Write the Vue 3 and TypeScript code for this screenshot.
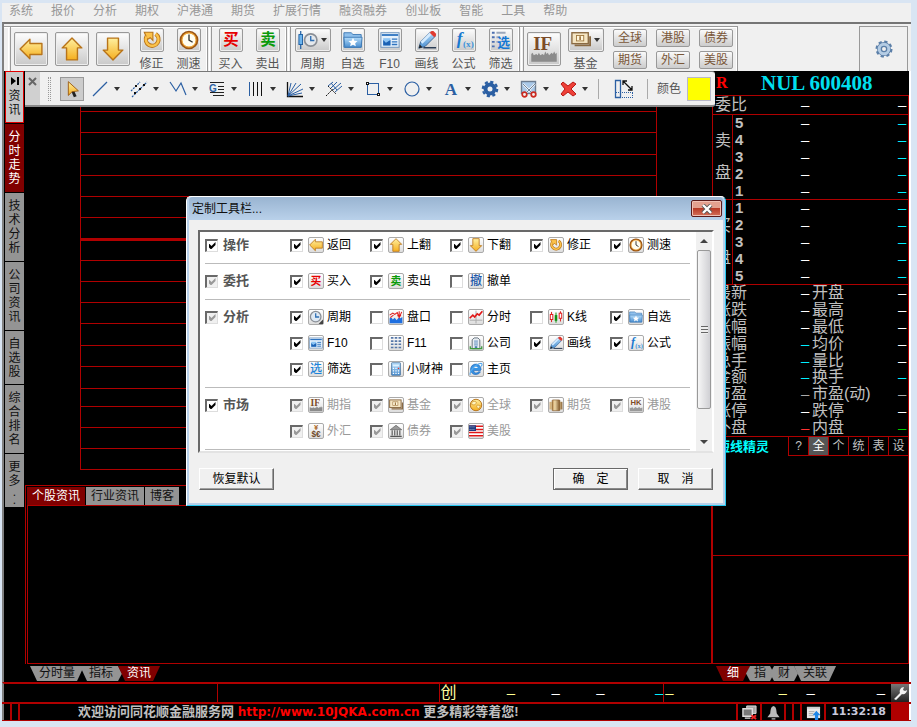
<script setup lang="ts">
import { h, ref } from 'vue'

interface Tool { icon: string; label: string; wide?: boolean }
interface Option { icon: string; label: string; on: boolean }
interface Section { name: string; on: boolean; lockedHead?: boolean; locked?: boolean; items: Option[] }
interface Quote { left: string; lt: string; right: string; rt: string }
interface Glyph { s: string; x: number; y: number; size: number; fill: string; face: string; weight?: number; slant?: string; start?: boolean }

const CJK = 'Noto Sans CJK SC, sans-serif'
const SERIF = 'Liberation Serif, serif'
const SANS = 'Liberation Sans, sans-serif'

// Lettering that belongs to an icon, in the icon's own coordinates
const glyphs: Record<string, Glyph[]> = {
  buy: [{ s: '买', x: 11, y: 17, size: 17, fill: '#e60000', face: CJK }],
  sell: [{ s: '卖', x: 11, y: 17, size: 17, fill: '#0a9a0a', face: CJK }],
  cancel: [{ s: '撤', x: 11, y: 18, size: 19, fill: '#1c57a8', face: CJK, weight: 500 }],
  pick: [{ s: '选', x: 11, y: 18, size: 19, fill: '#1d84d8', face: CJK, weight: 500 }],
  fx: [
    { s: 'f', x: 3, y: 15, size: 19, fill: '#1879d0', face: SERIF, slant: 'italic', start: true },
    { s: '(x)', x: 10, y: 19, size: 10, fill: '#3a93dc', face: SERIF, start: true },
  ],
  filter: [{ s: '选', x: 14, y: 19, size: 14, fill: '#1477d4', face: CJK }],
  if: [{ s: 'IF', x: 10, y: 12, size: 15, fill: '#7c4c28', face: SERIF }],
  hk: [{ s: 'HK', x: 11, y: 11, size: 12, fill: '#7c4c28', face: SANS }],
  fxrate: [
    { s: '¥', x: 11, y: 10, size: 12, fill: '#a8641e', face: SANS },
    { s: '$€', x: 11, y: 20, size: 13, fill: '#6d4828', face: SANS },
  ],
  gann: [{ s: 'G', x: 5, y: 12, size: 10, fill: '#2b5fa3', face: SANS }],
  text: [{ s: 'A', x: 9, y: 15, size: 17, fill: '#2b5fa3', face: SERIF }],
}
const lettersOnly = ['buy', 'sell', 'cancel', 'pick', 'fx', 'fxrate', 'text']

const Icon = (props: { name: string; box?: number }) => {
  const box = props.box ?? 22
  const art = lettersOnly.includes(props.name) ? [] : [h('use', { href: '#i-' + props.name, width: box, height: box })]
  const letters = (glyphs[props.name] ?? []).map(g => h('text', {
    x: g.x,
    y: g.y,
    fill: g.fill,
    'font-size': g.size,
    'font-family': g.face,
    'font-weight': g.weight ?? 700,
    'font-style': g.slant ?? 'normal',
    'text-anchor': g.start ? 'start' : 'middle',
  }, g.s))
  return h('svg', { viewBox: `0 0 ${box} ${box}`, 'aria-hidden': 'true' }, [...art, ...letters])
}
Icon.props = ['name', 'box']

const menus = ['系统', '报价', '分析', '期权', '沪港通', '期货', '扩展行情', '融资融券', '创业板', '智能', '工具', '帮助']

const navTools: Tool[] = [
  { icon: 'left', label: '返回' },
  { icon: 'up', label: '上翻' },
  { icon: 'down', label: '下翻' },
]
const baseTools: Tool[] = [
  { icon: 'redo', label: '修正' },
  { icon: 'clock', label: '测速' },
]
const tradeTools: Tool[] = [
  { icon: 'buy', label: '买入' },
  { icon: 'sell', label: '卖出' },
]
const viewTools: Tool[] = [
  { icon: 'period', label: '周期', wide: true },
  { icon: 'folder', label: '自选' },
  { icon: 'f10', label: 'F10' },
  { icon: 'pencil', label: '画线' },
  { icon: 'fx', label: '公式' },
  { icon: 'filter', label: '筛选' },
]
const markets = ['全球', '港股', '债券', '期货', '外汇', '美股']

const drawTools = ['line', 'parallel', 'zigzag', 'gann', 'bars', 'fan', 'fork', 'rect', 'circle', 'text', 'gear', 'cut', 'cross']

const sideTabs = ['分时走势', '技术分析', '公司资讯', '自选股', '综合排名', '更多..']
const newsTabs = ['个股资讯', '行业资讯', '博客']

const gridLines = [4, 25, 47, 68, 89, 110, 153, 174, 195, 216, 238, 259, 281, 299, 320, 341, 362]

const quotes: Quote[] = [
  { left: '最新', lt: 'white', right: '开盘', rt: 'white' },
  { left: '涨跌', lt: 'white', right: '最高', rt: 'white' },
  { left: '涨幅', lt: 'white', right: '最低', rt: 'white' },
  { left: '振幅', lt: 'cyan', right: '均价', rt: 'white' },
  { left: '总手', lt: 'cyan', right: '量比', rt: 'white' },
  { left: '金额', lt: 'cyan', right: '换手', rt: 'cyan' },
  { left: '市盈', lt: 'dim', right: '市盈(动)', rt: 'dim' },
  { left: '涨停', lt: 'white', right: '跌停', rt: 'white' },
  { left: '外盘', lt: 'red', right: '内盘', rt: 'green' },
]
const books = [
  { name: '卖盘', levels: [5, 4, 3, 2, 1] },
  { name: '买盘', levels: [1, 2, 3, 4, 5] },
]
const spiritTabs = ['?', '全', '个', '统', '表', '设']

const sections = ref<Section[]>([
  {
    name: '操作', on: true, items: [
      { icon: 'left', label: '返回', on: true },
      { icon: 'up', label: '上翻', on: true },
      { icon: 'down', label: '下翻', on: true },
      { icon: 'redo', label: '修正', on: true },
      { icon: 'clock', label: '测速', on: true },
    ],
  },
  {
    name: '委托', on: true, lockedHead: true, items: [
      { icon: 'buy', label: '买入', on: true },
      { icon: 'sell', label: '卖出', on: true },
      { icon: 'cancel', label: '撤单', on: false },
    ],
  },
  {
    name: '分析', on: true, lockedHead: true, items: [
      { icon: 'watch', label: '周期', on: true },
      { icon: 'depth', label: '盘口', on: false },
      { icon: 'trend', label: '分时', on: false },
      { icon: 'candles', label: 'K线', on: false },
      { icon: 'folder', label: '自选', on: true },
      { icon: 'f10', label: 'F10', on: true },
      { icon: 'f11', label: 'F11', on: false },
      { icon: 'company', label: '公司', on: false },
      { icon: 'pencil', label: '画线', on: true },
      { icon: 'fx', label: '公式', on: true },
      { icon: 'pick', label: '筛选', on: true },
      { icon: 'calc', label: '小财神', on: false },
      { icon: 'ie', label: '主页', on: false },
    ],
  },
  {
    name: '市场', on: true, locked: true, items: [
      { icon: 'if', label: '期指', on: true },
      { icon: 'money', label: '基金', on: true },
      { icon: 'globe', label: '全球', on: true },
      { icon: 'barrel', label: '期货', on: true },
      { icon: 'hk', label: '港股', on: true },
      { icon: 'fxrate', label: '外汇', on: true },
      { icon: 'bank', label: '债券', on: true },
      { icon: 'flag', label: '美股', on: true },
    ],
  },
])
</script>

<template>
  <svg class="defs" width="0" height="0" aria-hidden="true">
    <defs>
      <linearGradient id="gold" x1="0" y1="0" x2="0" y2="1">
        <stop offset="0" stop-color="#fff0a0" /><stop offset="1" stop-color="#f5ae1e" />
      </linearGradient>
      <linearGradient id="blue" x1="0" y1="0" x2="0" y2="1">
        <stop offset="0" stop-color="#b4dcfa" /><stop offset="1" stop-color="#4a8ed0" />
      </linearGradient>
      <linearGradient id="brown" x1="0" y1="0" x2="1" y2="0">
        <stop offset="0" stop-color="#b98a4c" /><stop offset=".35" stop-color="#efd9a8" /><stop offset="1" stop-color="#7c5426" />
      </linearGradient>
    </defs>
    <symbol id="i-left" viewBox="0 0 22 22"><path d="M1 11 10 2v4h11v10H10v4z" fill="url(#gold)" stroke="#b8741a" stroke-width="1.3" stroke-linejoin="round" /></symbol>
    <symbol id="i-up" viewBox="0 0 22 22"><path d="M11 1 20 10h-4v11H6V10H2z" fill="url(#gold)" stroke="#b8741a" stroke-width="1.3" stroke-linejoin="round" /></symbol>
    <symbol id="i-down" viewBox="0 0 22 22"><path d="M11 21 20 12h-4V1H6v11H2z" fill="url(#gold)" stroke="#b8741a" stroke-width="1.3" stroke-linejoin="round" /></symbol>
    <symbol id="i-redo" viewBox="0 0 22 22">
      <path d="M15 4.500A7 7 0 1 1 5 7" fill="none" stroke="#b8741a" stroke-width="4.600" />
      <path d="M2.500 2.500h9.500v9l-3-3-3 2z" fill="#fbc24a" stroke="#b8741a" stroke-width="1.200" />
      <path d="M15 4.500A7 7 0 1 1 5 7" fill="none" stroke="#fbc24a" stroke-width="2.600" />
    </symbol>
    <symbol id="i-clock" viewBox="0 0 22 22">
      <circle cx="11" cy="11" r="9" fill="#fffdf0" stroke="#9a5312" stroke-width="2.600" />
      <circle cx="11" cy="11" r="7.800" fill="none" stroke="#efa534" stroke-width="1.200" />
      <path d="M11 5v6l4 2.500" fill="none" stroke="#333" stroke-width="1.500" />
    </symbol>
    <symbol id="i-period" viewBox="0 0 22 22">
      <path d="M3 1v20" stroke="#1b5ca0" stroke-width="1.300" /><rect x="1" y="5" width="4" height="11" fill="#6db5ee" stroke="#1b5ca0" />
      <circle cx="14" cy="11" r="6.800" fill="#e4e8ec" stroke="#8a8f96" stroke-width="1.800" /><path d="M14 6.500v5h4" fill="none" stroke="#2e6fb4" stroke-width="1.500" />
    </symbol>
    <symbol id="i-watch" viewBox="0 0 22 22">
      <circle cx="10.500" cy="10.500" r="8.300" fill="#dfe9f3" stroke="#8a8f96" stroke-width="2" /><path d="M10.500 5v6h5.500" fill="none" stroke="#2e6fb4" stroke-width="2" /><path d="M22 15v7h-7z" fill="#444" />
    </symbol>
    <symbol id="i-folder" viewBox="0 0 22 22">
      <path d="M1 3h8l2 2h9v14H1z" fill="#8fc0ec" stroke="#3c78b4" /><path d="M1 8h20l-1 11H2z" fill="url(#blue)" stroke="#3c78b4" />
      <path d="m11 8.500 1.500 3.200 3.500.4-2.600 2.400.7 3.500-3.100-1.700-3.100 1.700.7-3.500L6 12.100l3.500-.4z" fill="#fff" />
    </symbol>
    <symbol id="i-f10" viewBox="0 0 22 22">
      <rect x="1" y="3" width="20" height="16" fill="#e6f1fb" stroke="#6a8fb8" /><path d="M2 5.500h18" stroke="#2f74c0" stroke-width="2" />
      <path d="M3.500 9h8v8h-8z" fill="#8cc4f4" /><path d="m3.500 11 3 3 5-3v6h-8z" fill="#1c62b4" /><path d="M13 10h6M13 13h6M13 16h6" stroke="#2f74c0" stroke-width="1.500" />
    </symbol>
    <symbol id="i-pencil" viewBox="0 0 22 22">
      <path d="M7 19.500h14" stroke="#2b3d55" stroke-width="1.600" /><path d="m2 20 2-7L15 2l5 5L9 18z" fill="url(#blue)" stroke="#35608f" /><path d="M4 13 15 2l2 2L6 15z" fill="#d4ebff" /><path d="m14 3 2-2h2l3 3v2l-2 2z" fill="#e03a30" /><path d="m2 20 1-4 3 3z" fill="#222" />
    </symbol>
    <symbol id="i-filter" viewBox="0 0 22 22">
      <path d="M1 3h3M1 8h3M1 13h3M1 18h3" stroke="#4d6fb0" stroke-width="2" /><path d="M6 3h10M6 8h4M6 13h2" stroke="#9ba7bb" stroke-width="2" />
    </symbol>
    <symbol id="i-if" viewBox="0 0 22 22">
      <path d="M1 21v-6l1-1 1 2 2-1 1 1 1-2 1 2 2-1 1 1 1-3 1 2 1-1 1 2 2-2 1 1 1-2 1 2 1-1v7z" fill="#8b8b8b" />
    </symbol>
    <symbol id="i-money" viewBox="0 0 22 22">
      <path d="M4 17h17V7" fill="none" stroke="#8a6a42" stroke-width="2" /><rect x="1" y="3" width="18" height="12" fill="#f5e6c4" stroke="#8a6a42" stroke-width="1.500" /><rect x="6" y="6" width="8" height="6" fill="#fff6dc" stroke="#a07840" /><path d="M10 7v4" stroke="#8a5a20" stroke-width="1.500" />
    </symbol>
    <symbol id="i-depth" viewBox="0 0 22 22">
      <path d="M1 21v-8l3-1 2 3 3-3 3 4 3-4 3 1 3-2v10z" fill="#1f6fe0" /><path d="m1 8 5-3 3 2 4-3 3 8 4-9M13 9h6M16 2v10M2 12l5-4" fill="none" stroke="#e01818" stroke-width="1.600" />
    </symbol>
    <symbol id="i-trend" viewBox="0 0 22 22">
      <path d="M1 16h20M11 1v20" stroke="#aaa" stroke-width="1.500" /><path d="m1 13 5-5 3 3 4-5 3 2 5-6" fill="none" stroke="#e01818" stroke-width="2.600" />
    </symbol>
    <symbol id="i-candles" viewBox="0 0 22 22">
      <path d="M4 3v16M18 2v16" stroke="#e01818" stroke-width="1.500" /><path d="M11 4v16" stroke="#109010" stroke-width="1.500" /><rect x="2" y="7" width="4" height="8" fill="#fff" stroke="#e01818" stroke-width="1.500" /><rect x="9" y="8" width="4" height="9" fill="#109010" /><rect x="16" y="5" width="4" height="8" fill="#fff" stroke="#e01818" stroke-width="1.500" />
    </symbol>
    <symbol id="i-f11" viewBox="0 0 22 22"><path d="M3 3h16M3 8h16M3 13h16M3 18h16" stroke="#5577a8" stroke-width="2.500" stroke-dasharray="4 2" /></symbol>
    <symbol id="i-company" viewBox="0 0 22 22">
      <path d="M5 20V6l3-3h6l3 3v14z" fill="#e8edf2" stroke="#66727e" stroke-width="1.500" /><path d="M8 8h6M8 11h6M8 14h6" stroke="#5b8cc0" stroke-width="1.500" /><path d="M9 16h4v4H9z" fill="#4b7fb4" /><path d="M1 20h20M2 16v4M20 16v4" stroke="#3e9a3e" stroke-width="2" />
    </symbol>
    <symbol id="i-calc" viewBox="0 0 22 22">
      <rect x="4" y="1" width="14" height="20" rx="1" fill="url(#blue)" stroke="#35608f" /><path d="M6 4h10v3H6z" fill="#dff1ff" /><path d="M6 10h10M6 14h10M6 18h10" stroke="#fff" stroke-width="2" stroke-dasharray="2 2" /><path d="M14 9h2v2h-2z" fill="#d33" />
    </symbol>
    <symbol id="i-ie" viewBox="0 0 22 22">
      <path d="M18 13.500H7a4.500 4.500 0 0 0 8 2h3A8.300 8.300 0 1 1 19 12z" fill="#3793e4" stroke="#1c62b4" /><path d="M7.500 9.500H14a3.400 3.400 0 0 0-6.500 0z" fill="#f4f4f4" /><path d="M2 20C0 15 10 3 19 2c2 0 2 3 0 5" fill="none" stroke="#55aaf0" stroke-width="1.800" />
    </symbol>
    <symbol id="i-globe" viewBox="0 0 22 22"><circle cx="11" cy="11" r="9" fill="url(#gold)" stroke="#b8741a" stroke-width="1.500" /><path d="m5 6 5-1 2 3-4 3-4-1zM13 11l5 1-3 5-3-3z" fill="#fff5c0" stroke="#c98a20" /></symbol>
    <symbol id="i-barrel" viewBox="0 0 22 22"><rect x="1" y="6" width="7" height="12" fill="url(#brown)" /><rect x="14" y="6" width="7" height="12" fill="url(#brown)" /><rect x="5" y="3" width="12" height="17" rx="1" fill="url(#brown)" stroke="#80592c" /></symbol>
    <symbol id="i-hk" viewBox="0 0 22 22"><path d="M1 21v-6l2 1 2-2 2 3 3-3 3 2 3-2 2 2 3-1v6z" fill="#9a9a9a" /></symbol>
    <symbol id="i-bank" viewBox="0 0 22 22"><path d="M11 2 20 9H2z" fill="#999" stroke="#555" /><path d="M5 10v8M9 10v8M13 10v8M17 10v8" stroke="#666" stroke-width="2" /><path d="M2 19.500h18" stroke="#555" stroke-width="2" /></symbol>
    <symbol id="i-flag" viewBox="0 0 22 22"><path d="M0 2h22v18H0z" fill="#fff" /><path d="M0 3.500h22M0 8.500h22M0 13.500h22M0 18.500h22" stroke="#e01818" stroke-width="2.400" /><path d="M0 2h11v9H0z" fill="#1f3a80" /><path d="M1 4.500h9M1 8.500h9" stroke="#fff" stroke-dasharray="1.500 1.500" /></symbol>

    <symbol id="i-line" viewBox="0 0 18 18"><path d="M2 16 16 2" stroke="#2b5fa3" stroke-width="1.200" /></symbol>
    <symbol id="i-parallel" viewBox="0 0 18 18"><path d="M1 11 10 2M2 17 17 2" stroke="#2b5fa3" stroke-width="1.200" stroke-dasharray="2 1" /><path d="M5 5h2v2H5zM13 4h2v2h-2zM4 12h2v2H4zM9 8h2v2H9z" fill="#111" /></symbol>
    <symbol id="i-zigzag" viewBox="0 0 18 18"><path d="m1 2 6 9 5-8 5 12" fill="none" stroke="#2b5fa3" stroke-width="1.200" /></symbol>
    <symbol id="i-gann" viewBox="0 0 18 18"><path d="M2 2.500h14M10 6.500h6M10 9.500h6M2 12.500h14M5 15.500h11" stroke="#222" /></symbol>
    <symbol id="i-bars" viewBox="0 0 18 18"><path d="M2.500 2v14" stroke="#2b5fa3" /><path d="M6.500 2v14M10.500 2v14M14.500 2v14" stroke="#111" /></symbol>
    <symbol id="i-fan" viewBox="0 0 18 18"><path d="M1.500 2v14.500H17" fill="none" stroke="#111" stroke-width="1.300" /><path d="M2 16 5 3M2 16 10 3M2 16 15 4M2 16 17 9M2 16l14-3" stroke="#2b5fa3" /></symbol>
    <symbol id="i-fork" viewBox="0 0 18 18"><path d="M1 16 8 9M3 6l8 8" stroke="#111" stroke-dasharray="2 1" /><path d="M3 6 8 2M6 8l6-6M8 10l8-7M10 12l7-6M6 3l6 7" stroke="#2b5fa3" /></symbol>
    <symbol id="i-rect" viewBox="0 0 18 18"><rect x="3.500" y="3.500" width="11" height="11" fill="none" stroke="#2b5fa3" /><path d="M2 2h3v3H2zM13 13h3v3h-3z" fill="#111" /><path d="M3 3h1v1H3zM14 14h1v1h-1z" fill="#fff" /></symbol>
    <symbol id="i-circle" viewBox="0 0 18 18"><circle cx="9" cy="9" r="7" fill="none" stroke="#2b5fa3" stroke-width="1.200" /></symbol>
    <symbol id="i-gear" viewBox="0 0 18 18"><circle cx="9" cy="9" r="4.500" fill="none" stroke="currentColor" stroke-width="4" /><circle cx="9" cy="9" r="7.200" fill="none" stroke="currentColor" stroke-width="2.200" stroke-dasharray="3.200 2.455" /></symbol>
    <symbol id="i-cog" viewBox="0 0 18 18">
      <circle cx="9" cy="9" r="7.200" fill="none" stroke="#5b7fa8" stroke-width="2.600" stroke-dasharray="3.200 2.455" />
      <circle cx="9" cy="9" r="4.500" fill="none" stroke="#5b7fa8" stroke-width="5" /><circle cx="9" cy="9" r="4.800" fill="none" stroke="#b4cce4" stroke-width="3" />
    </symbol>
    <symbol id="i-cut" viewBox="0 0 18 18"><rect x="1.500" y="1.500" width="14" height="12" fill="#a9c8e8" stroke="#6c7c90" stroke-width="1.400" /><path d="m3 4 8 8M15 4l-8 8" stroke="#f2f6fa" stroke-width="2" /><path d="m3 4 8 8M15 4l-8 8" stroke="#708298" /><circle cx="4.500" cy="14.500" r="2.300" fill="#eee" stroke="#cc2a20" stroke-width="1.700" /><circle cx="13.500" cy="14.500" r="2.300" fill="#eee" stroke="#cc2a20" stroke-width="1.700" /></symbol>
    <symbol id="i-cross" viewBox="0 0 18 18"><path d="m2 4 2-2 5 4 5-4 3 2-5 5 5 5-3 2-5-4-5 4-2-2 4-5z" fill="#ee4038" stroke="#b81a16" stroke-linejoin="round" /></symbol>
  </svg>

  <div class="window">
    <nav class="menubar">
      <a v-for="m in menus" :key="m" href="#">{{ m }}</a>
    </nav>

    <header class="toolbar">
      <div class="group first">
        <i class="grip"></i>
        <div class="bigs">
          <button v-for="t in navTools" :key="t.icon" class="tile big" :aria-label="t.label"><Icon :name="t.icon" /></button>
        </div>
        <button v-for="t in baseTools" :key="t.icon" class="tool"><span class="tile"><Icon :name="t.icon" /></span>{{ t.label }}</button>
      </div>
      <div class="group">
        <i class="grip"></i>
        <button v-for="t in tradeTools" :key="t.icon" class="tool"><span class="tile"><Icon :name="t.icon" /></span>{{ t.label }}</button>
      </div>
      <div class="group">
        <i class="grip"></i>
        <button v-for="t in viewTools" :key="t.icon" class="tool" :class="{ wide: t.wide }"><span class="tile"><Icon :name="t.icon" /><i v-if="t.wide" class="caret"></i></span>{{ t.label }}</button>
      </div>
      <div class="group">
        <i class="grip"></i>
        <div class="bigs"><button class="tile big index" aria-label="期指"><Icon name="if" /></button></div>
        <button class="tool wide"><span class="tile"><Icon name="money" /><i class="caret"></i></span>基金</button>
        <div class="markets">
          <button v-for="m in markets" :key="m">{{ m }}</button>
        </div>
      </div>
      <div class="settings"><button aria-label="设置"><Icon name="cog" :box="18" /></button></div>
    </header>

    <div class="main">
      <aside class="side">
        <button class="news-toggle">
          <svg viewBox="0 0 8 8"><path d="M0 0l5 4-5 4zM6 0h2v8H6z" /></svg>
          <span>资讯</span>
        </button>
        <button v-for="(s, i) in sideTabs" :key="s" :class="{ active: i === 0, short: s.length < 4 }">
          <span v-for="(c, k) in s" :key="k">{{ c }}</span>
        </button>
      </aside>

      <section class="center">
        <div class="drawbar">
          <button class="drawclose" aria-label="关闭"><svg viewBox="0 0 9 9"><path d="m1 1 7 7M8 1 1 8" stroke="#666" stroke-width="2" /></svg></button>
          <i class="dots"></i>
          <button class="pointer" aria-label="选择"><svg viewBox="0 0 24 24"><path d="m11 14 3 7 3-1-3-7z" fill="#222" /><path d="M8 4v15l4-4 7-1z" fill="url(#gold)" stroke="#9a5a10" /></svg></button>
          <div class="drawtools">
            <button v-for="d in drawTools" :key="d" :aria-label="d" class="drawtool"><Icon :name="d" :box="18" /><i class="caret"></i></button>
          </div>
          <i class="rule"></i>
          <button class="measure" aria-label="区间统计"><svg viewBox="0 0 20 20"><path d="M1.500 13V1.500h5V13" fill="none" stroke="#2b5fa3" stroke-width="1.300" /><path d="M1.500 13v5.500h5V13" fill="none" stroke="#2b5fa3" stroke-width="1.300" /><path d="M2 13.500h17M8 18.500h11M18.500 14v5" stroke="#2b5fa3" stroke-dasharray="1 1" /><path d="m9 2 9 9M9 6V2h4M18 7v4h-4" fill="none" stroke="#111" stroke-width="1.300" /></svg></button>
          <i class="rule"></i>
          <button class="color">颜色<span class="swatch"></span></button>
        </div>

        <div class="chart">
          <svg class="plot">
            <rect v-for="y in gridLines" :key="y" x="0" :y="y" width="100%" height="1" />
            <rect x="0" y="131" width="100%" height="3" />
            <rect x="0" y="0" width="1" height="363" />
            <rect class="far" x="100%" y="0" width="1" height="363" />
          </svg>
        </div>

        <div class="news">
          <div class="newstabs">
            <button v-for="(n, i) in newsTabs" :key="n" :class="{ active: i === 0 }">{{ n }}</button>
          </div>
          <div class="newsbody"></div>
        </div>

        <div class="foot-tabs">
          <button class="ft lead">分时量</button>
          <button class="ft mid">指标</button>
          <button class="ft lead active">资讯</button>
        </div>
      </section>

      <aside class="quote">
        <h1><b>R</b><span>NUL 600408</span></h1>
        <div class="panel">
          <div class="ratio"><span>委比</span><i>–</i><i>–</i></div>
          <div v-for="b in books" :key="b.name" class="book">
            <div class="bname"><span>{{ b.name }}</span></div>
            <div class="levels">
              <div v-for="l in b.levels" :key="l" class="level"><b>{{ l }}</b><i>–</i><i class="cyan">–</i></div>
            </div>
          </div>
          <div class="stats">
            <div v-for="q in quotes" :key="q.left" class="stat">
              <span>{{ q.left }}</span><i :class="q.lt">–</i><span>{{ q.right }}</span><i :class="q.rt">–</i>
            </div>
          </div>
          <div class="spirit">
            <strong>短线精灵</strong>
            <button v-for="s in spiritTabs" :key="s" :class="{ active: s === '全' }">{{ s }}</button>
          </div>
          <div class="feed"></div>
          <div class="feed lower"></div>
        </div>
        <div class="foot-tabs right">
          <button class="ft lead active">细</button>
          <button class="ft mid">指</button>
          <button class="ft mid">财</button>
          <button class="ft lead">关联</button>
        </div>
      </aside>
    </div>

    <div class="ticker">
      <div class="cell a"></div>
      <div class="cell b"></div>
      <div class="cell c"><em>创</em><i class="d1 pale">–</i><i class="d2">–</i><i class="d2">–</i><i class="d1 cyan">–</i></div>
      <div class="cell d"><i class="pale">–</i><i class="d3 pale">–</i><i class="d4">–</i><i class="d5">–</i></div>
      <button class="wrench" aria-label="工具"><svg viewBox="0 0 18 18"><path d="M3 15 9 9c-1-3 1-6 4-6l-1 3 2 1 2-1c0 3-3 5-5 4l-6 6z" fill="#f2f2f2" /></svg></button>
    </div>

    <footer class="status">
      <i class="bar"></i><i class="bar"></i>
      <p>欢迎访问同花顺金融服务网 <a href="#">http://www.10JQKA.com.cn</a> 更多精彩等着您!</p>
      <div class="tray"><svg viewBox="0 0 16 16"><path d="M5 1h10v8H5z" fill="#aaa" stroke="#ddd" /><path d="M1 4h10v8H1z" fill="#777" stroke="#ddd" stroke-width="1.500" /><path d="M3 14h6" stroke="#ccc" stroke-width="1.500" /><path d="m10 11 5 4M15 11l-5 4" stroke="#e22" stroke-width="2" /></svg></div>
      <div class="tray"><svg viewBox="0 0 16 16"><path d="M8 1c3 1 3 4 3.500 8l3 4h-13l3-4C5 5 5 2 8 1zM6 14h4v1.500H6z" fill="#bbb" /></svg></div>
      <div class="slot"></div><div class="slot"></div>
      <div class="tray"><svg viewBox="0 0 16 16"><path d="M1 2h14v12H1z" fill="#e8e8e8" /><path d="M1 2h14v2H1z" fill="#ccc" /><path d="M3 7h6M3 9h5M3 11h5" stroke="#aaa" /><path d="m11 6 4.500 5H13v5H9.500v-5H7z" fill="#1e86e8" /></svg></div>
      <time>11:32:18</time>
      <div class="block"></div>
    </footer>

    <div class="dialog" role="dialog" aria-label="定制工具栏">
      <div class="caption">
        <span>定制工具栏...</span>
        <button aria-label="关闭"><svg viewBox="0 0 12 10"><path d="m2 1 8 8M10 1 2 9" stroke="#555" stroke-width="4" /><path d="m2 1 8 8M10 1 2 9" stroke="#fff" stroke-width="2.400" /></svg></button>
      </div>
      <div class="body">
        <div class="list">
          <div class="sections">
            <div v-for="s in sections" :key="s.name" class="section">
              <label class="head"><input v-model="s.on" type="checkbox" :disabled="s.lockedHead">{{ s.name }}</label>
              <div class="items">
                <label v-for="o in s.items" :key="o.label" class="item" :class="{ locked: s.locked }">
                  <input v-model="o.on" type="checkbox" :disabled="s.locked">
                  <span class="mini"><Icon :name="o.icon" /></span>{{ o.label }}
                </label>
              </div>
            </div>
          </div>
          <div class="scroll">
            <button class="step up" aria-label="向上"></button>
            <div class="track"><div class="thumb"><i></i></div></div>
            <button class="step down" aria-label="向下"></button>
          </div>
        </div>
        <div class="actions">
          <button>恢复默认</button>
          <button class="default">确　定</button>
          <button>取　消</button>
        </div>
      </div>
    </div>
  </div>
</template>

<style>
body { background: #d9e5f3; }
</style>

<style scoped>
.defs { position: absolute; }
.window, .window * { box-sizing: border-box; }
.window {
  --red: #b00000;
  position: relative;
  display: flex;
  flex-direction: column;
  min-height: 100vh;
  padding: 3px 6px 6px 2px;
  font: 12px/14px "Liberation Sans", "Noto Sans CJK SC", sans-serif;
  background: #d9e5f3;
}
button { margin: 0; padding: 0; border: 0; background: none; font: inherit; color: inherit; white-space: nowrap; }
i, em { font-style: normal; }
a { text-decoration: none; }
svg { display: block; }

.menubar { display: flex; gap: 18px; height: 19px; padding-left: 7px; background: #f0f0f0; line-height: 17px; }
.menubar a { color: #979797; }

.toolbar { display: flex; height: 49px; border-top: 2px solid #757575; background: #f0f0f0; border-left: 2px solid #808080; color: #555; }
.group { display: flex; align-items: center; margin-top: 2px; border-top: 1px solid #999; border-right: 1px solid #999; box-shadow: inset -1px 1px #fff; }
.group.first { padding-left: 3px; }
.grip { width: 3px; margin: 0 0 0 1px; align-self: stretch; border-left: 1px solid #fff; border-right: 1px solid #999; }
.bigs { display: flex; gap: 7px; padding: 0 3px; }
.tile { display: flex; align-items: center; justify-content: center; width: 24px; height: 24px; border: 1px solid #999; border-radius: 2px; background: linear-gradient(#fdfdfd, #c9c9c9); box-shadow: inset 0 0 0 1px #eee; }
.tile svg { width: 20px; height: 20px; }
.tile.big { width: 34px; height: 34px; }
.tile.big svg { width: 24px; height: 24px; }
.tile.index svg { width: 28px; height: 28px; }
.tool { display: flex; flex-direction: column; align-items: center; gap: 5px; width: 37px; }
.tool.wide { width: 43px; }
.wide .tile { width: 36px; gap: 3px; }
.caret { width: 0; height: 0; border: 3px solid transparent; border-top: 4px solid #333; border-bottom: 0; }
.markets { display: grid; grid-template-columns: repeat(3, 34px); gap: 4px 9px; padding: 0 4px 0 6px; }
.markets button { height: 18px; border: 1px solid #999; border-radius: 2px; background: linear-gradient(#fafafa, #ccc); color: #7a5738; line-height: 16px; }
.settings { display: flex; align-items: center; justify-content: center; width: 49px; margin: 2px 3px 0 auto; border: solid #999; border-width: 1px 1px 0; }
.settings svg { width: 18px; height: 18px; }

.main { display: flex; flex: 1; background: #000; border-left: 2px solid #808080; border-right: 2px solid #fff; }
.side { display: flex; flex-direction: column; gap: 1px; width: 21px; padding: 0 1px; background: #000; }
.side button { display: flex; flex-direction: column; align-items: center; justify-content: center; width: 19px; height: 68px; background: #949494; color: #111; }
.side button.short { height: 53px; }
.side button span { width: 12px; line-height: 14px; text-align: center; white-space: normal; word-break: break-all; }
.side button.active { background: #800000; color: #fff; }
.side .news-toggle { gap: 4px; height: 52px; border: 1px solid #e00000; background: #c8c8c8; }
.side button:last-child { justify-content: flex-start; height: 53px; padding-top: 6px; }
.side button:last-child span:nth-child(n + 3) { line-height: 8px; }
.news-toggle svg { width: 8px; height: 8px; }

.center { display: flex; flex-direction: column; flex: 1; min-width: 0; }
.drawbar { position: relative; z-index: 1; display: flex; align-items: center; height: 36px; margin-right: -3px; border-top: 1px solid #777; border-bottom: 2px solid #888; border-radius: 0 3px 3px 0; background: #f0f0f0; color: #555; }
.drawclose { width: 15px; align-self: stretch; background: #d0d0d0; padding: 5px 3px; display: flex; }
.drawclose svg { width: 9px; height: 9px; }
.dots { width: 3px; height: 24px; margin: 0 9px 0 8px; border: dotted #999; border-width: 0 1px; }
.pointer { width: 24px; height: 24px; border: 1px solid #999; background: #ccc; }
.pointer svg { width: 22px; height: 22px; }
.drawtools { display: flex; padding-left: 7px; }
.drawtool { display: flex; align-items: center; gap: 5px; width: 39px; color: #2b5fa3; }
.drawtool svg { width: 18px; height: 18px; }
.rule { width: 1px; height: 20px; background: #aaa; }
.measure { margin: 0 13px 0 15px; }
.measure svg { width: 20px; height: 20px; }
.color { display: flex; align-items: center; gap: 6px; margin-left: 9px; }
.swatch { width: 24px; height: 24px; border: 1px solid #b8b8c8; background: #ff0; }

.chart { flex: 1; padding: 0 55px 0 55px; }
.plot { width: 100%; height: 363px; fill: var(--red); overflow: hidden; }
.plot .far { transform: translateX(-1px); }

.news { border-top: 1px solid var(--red); border-left: 1px solid var(--red); }
.newstabs { display: flex; gap: 1px; height: 19px; padding: 1px 0 0 1px; }
.newstabs button { padding: 0 5px; background: #949494; color: #111; line-height: 18px; }
.newstabs .active { background: #800000; color: #fff; }
.newsbody { height: 159px; margin-left: 1px; border: 1px solid var(--red); }

.foot-tabs { display: flex; height: 18px; padding: 2px 0 1px 5px; font-size: 12px; }
.ft { height: 15px; margin-right: -4px; padding: 0 9px; background: #949494; color: #111; line-height: 15px; }
.ft.lead { clip-path: polygon(0 0, 100% 0, calc(100% - 7px) 100%, 7px 100%); }
.ft.mid { clip-path: polygon(0 0, calc(100% - 4px) 0, 100% 50%, calc(100% - 4px) 100%, 7px 100%); }
.ft.active { background: #800000; color: #fff; }

.quote { display: flex; flex-direction: column; width: 197px; color: #c0c0c0; font-size: 16px; }
h1 { display: flex; height: 24px; margin: 0; padding-left: 4px; font: bold 21px/24px "Liberation Serif", serif; color: #00dfee; }
h1 b { width: 45px; font-size: 16px; color: #f00; }
.panel { flex: 1; display: flex; flex-direction: column; border: 1px solid var(--red); line-height: 16px; }
.panel i { width: 8px; margin-right: 2px; font-size: 15px; color: #fff; text-align: right; }
.ratio { display: grid; grid-template-columns: 1fr 8px 99px; align-items: center; height: 19px; padding: 0 0 0 2px; border-bottom: 1px solid var(--red); }
.ratio i:last-child, .level i:last-child { justify-self: end; }
.book { display: flex; height: 85px; border-bottom: 1px solid var(--red); }
.bname { width: 20px; display: flex; align-items: center; padding-left: 2px; border-right: 1px solid var(--red); }
.bname span { width: 16px; line-height: 32px; word-break: break-all; }
.levels { flex: 1; display: flex; flex-direction: column; }
.level { flex: 1; display: grid; grid-template-columns: 1fr 8px 99px; align-items: center; padding-left: 2px; font-size: 15px; }
.stats { height: 152px; display: flex; flex-direction: column; border-bottom: 1px solid var(--red); }
.stat { flex: 1; display: grid; grid-template-columns: 1fr 11px 1fr 10px; align-items: center; padding-left: 2px; }
.panel i.cyan, .ticker i.cyan { color: #00eeff; }
.panel i.dim { color: #aaa; }
.panel i.red { color: #f33; }
.panel i.green { color: #0c0; }
.spirit { display: flex; height: 19px; font-size: 12px; }
.spirit strong { flex: 1; padding-left: 4px; font-size: 13px; line-height: 20px; color: #0ff; }
.spirit button { width: 20px; border: solid var(--red); border-width: 0 0 1px 1px; }
.spirit .active { background: #555; color: #fff; }
.feed { flex: 99 1 0; }
.feed.lower { flex: 108 1 0; border-top: 1px solid var(--red); }
.right { padding-left: 4px; }
.right .mid { clip-path: polygon(4px 0, calc(100% - 4px) 0, 100% 50%, calc(100% - 4px) 100%, 4px 100%, 0 50%); padding: 0 8px; }
.foot-tabs.right .ft.active { padding: 0 11px; }

.ticker { display: flex; height: 20px; border-top: 2px solid var(--red); background: #000; border-left: 2px solid #808080; color: #fff; font-size: 15px; line-height: 18px; box-shadow: inset -2px 0 #fff; }
.cell { display: flex; border-right: 1px solid var(--red); }
.a { flex: 214 1 0; }
.b { flex: 222 1 0; }
.c { flex: 225 1 0; }
.d { flex: 221 1 0; border: 0; padding-left: 1px; }
.c em { width: 17px; padding-left: 1px; font-size: 16px; color: #ffffa0; }
.cell i { text-align: right; }
.cell i.pale { color: #ffff90; }
.d1 { flex: 59 1 0; }
.d2 { flex: 45 1 0; }
.d3 { flex: 113 1 0; }
.d4 { flex: 28 1 0; }
.d5 { flex: 70 1 0; }
.wrench { width: 18px; margin: 0 2px 0 6px; background: linear-gradient(#777, #222); }

.status { display: flex; height: 19px; border: solid var(--red); border-width: 2px 0 1px; background: #000; color: #c0c0c0; font: bold 13px/16px "Liberation Sans", "Noto Sans CJK SC", sans-serif; box-shadow: inset 2px 0 #808080, inset -2px 0 #fff; }
.bar { width: 8px; border-right: 2px solid var(--red); }
.bar:first-child { width: 10px; }
.status p { flex: 1; margin: 0; padding-left: 58px; white-space: nowrap; }
.status a { font: bold 12px/16px "DejaVu Sans", sans-serif; color: #f00; }
.tray { display: flex; align-items: center; justify-content: center; width: 24px; border-left: 2px solid var(--red); }
.tray svg { width: 15px; height: 15px; }
.slot { width: 8px; border-left: 2px solid var(--red); }
time { width: 67px; border-left: 2px solid var(--red); font: bold 11px/16px "DejaVu Sans", sans-serif; text-align: center; color: #c8c8dc; }
.block { width: 18px; margin-right: 2px; background: var(--red); }

.dialog { position: absolute; z-index: 2; left: 186px; top: 196px; width: 540px; padding: 0 2px 2px; border: 1px solid #fff; border-right-color: #28c8f0; border-bottom-color: #28c8f0; border-radius: 5px 5px 0 0; background: #b9d1ea; }
.caption { display: flex; align-items: center; justify-content: space-between; height: 23px; padding: 0 1px 0 3px; background: linear-gradient(#99b4d1, #b9d1ea); color: #111; border-radius: 4px 4px 0 0; }
.caption button { display: flex; align-items: center; justify-content: center; width: 31px; height: 17px; border: 1px solid #5a1a1a; border-radius: 2px; background: linear-gradient(#e3a08f 45%, #b83a26 50%, #d4705a); box-shadow: inset 0 0 0 1px #f0c0b4; }
.caption svg { width: 12px; height: 10px; }
.body { padding: 10px 9px 13px; background: #f0f0f0; }
.list { display: flex; border: 2px solid #696969; border-right-color: #fff; border-bottom-color: #e3e3e3; background: #fff; }
.sections { flex: 1; padding: 0 6px 1px 5px; }
.section { display: flex; padding: 4px 0 5px; border-bottom: 1px solid #bbb; }
.section:first-child { padding-top: 0; }
.head { display: flex; align-items: center; gap: 5px; width: 85px; height: 26px; font-size: 13px; font-weight: bold; color: #555; }
.items { flex: 1; display: grid; grid-template-columns: repeat(5, 1fr); }
.item { display: flex; align-items: center; height: 26px; white-space: nowrap; color: #000; }
.item.locked { color: #999; }
.mini { display: flex; align-items: center; justify-content: center; width: 16px; height: 16px; margin: 0 3px 0 5px; border: 1px solid #aaa; border-radius: 2px; background: linear-gradient(#fff, #ddd); }
.mini svg { width: 14px; height: 14px; }
input { appearance: none; display: grid; place-items: center; width: 13px; height: 13px; margin: 0; border: 2px solid #696969; border-width: 2px 1px 1px 2px; border-right-color: #ddd; border-bottom-color: #ddd; background: #fff; }
input:checked::after { content: ""; width: 7px; height: 7px; background: #000; clip-path: polygon(0 2px, 1px 2px, 3px 4px, 7px 0, 7px 3px, 3px 7px, 2px 7px, 0 5px); }
input:disabled { background: #f0f0f0; }
input:disabled::after { background: #999; }
.scroll { display: flex; flex-direction: column; width: 16px; background: #f0f0f0; }
.step { height: 18px; display: flex; align-items: center; justify-content: center; }
.step::after { content: ""; border: 4px solid transparent; }
.step.up::after { border-top: 0; border-bottom-color: #444; }
.step.down::after { border-bottom: 0; border-top-color: #444; }
.track { flex: 1; padding: 0 1px; }
.thumb { display: flex; align-items: center; justify-content: center; height: 87%; border: 1px solid #999; border-radius: 2px; background: linear-gradient(90deg, #f6f6f6, #d0d0d4); }
.thumb i { width: 7px; height: 8px; background: repeating-linear-gradient(#666 0 1px, #eee 1px 3px); }
.actions { display: flex; gap: 10px; padding: 15px 1px 0; }
.actions button { width: 75px; height: 22px; border: 1px solid #fff; border-right-color: #696969; border-bottom-color: #696969; box-shadow: inset -1px -1px #a0a0a0; background: #f0f0f0; color: #000; line-height: 18px; }
.actions button:first-child { margin-right: auto; }
.actions .default { border-color: #696969; box-shadow: inset 1px 1px #fff, inset -1px -1px #888; }
</style>
